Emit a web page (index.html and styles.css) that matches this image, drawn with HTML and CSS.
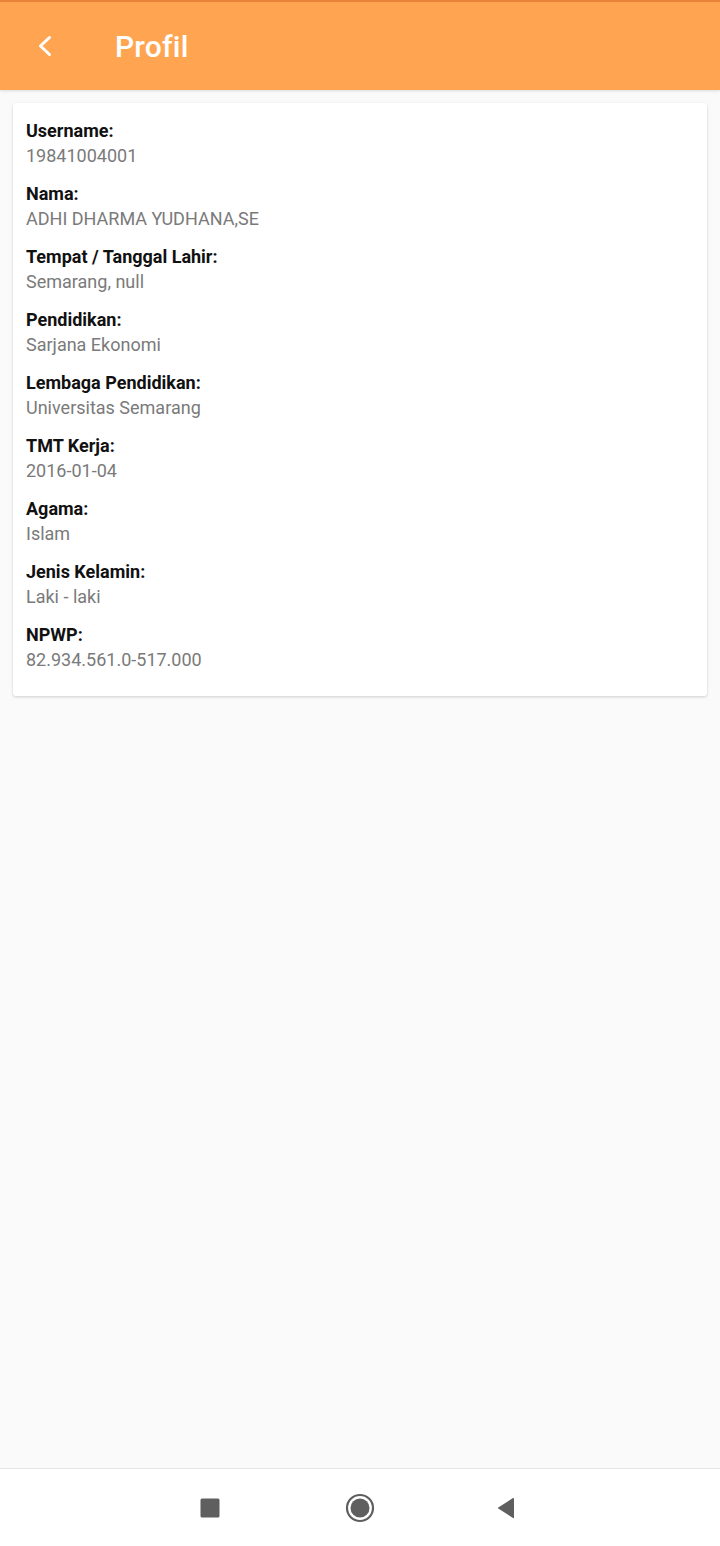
FILE: index.html
```html
<!DOCTYPE html>
<html lang="id">
<head>
    <meta charset="UTF-8">
    <meta name="viewport" content="width=device-width, initial-scale=1.0">
    <title>Profil</title>
    <link rel="stylesheet" href="styles.css">
</head>
<body>
    <div class="screen">
        <header class="appbar">
            <button class="back" aria-label="Kembali">
                <svg width="24" height="24" viewBox="0 0 24 24">
                    <polyline points="16.5,3.5 7.5,12 16.5,20.5" fill="none" stroke="#fff" stroke-width="3" stroke-linecap="round" stroke-linejoin="round"/>
                </svg>
            </button>
            <h1 class="title">Profil</h1>
        </header>

        <main class="content">
            <div class="card">
                <div class="field">
                    <div class="label">Username:</div>
                    <div class="value">19841004001</div>
                </div>
                <div class="field">
                    <div class="label">Nama:</div>
                    <div class="value">ADHI DHARMA YUDHANA,SE</div>
                </div>
                <div class="field">
                    <div class="label">Tempat / Tanggal Lahir:</div>
                    <div class="value">Semarang, null</div>
                </div>
                <div class="field">
                    <div class="label">Pendidikan:</div>
                    <div class="value">Sarjana Ekonomi</div>
                </div>
                <div class="field">
                    <div class="label">Lembaga Pendidikan:</div>
                    <div class="value">Universitas Semarang</div>
                </div>
                <div class="field">
                    <div class="label">TMT Kerja:</div>
                    <div class="value">2016-01-04</div>
                </div>
                <div class="field">
                    <div class="label">Agama:</div>
                    <div class="value">Islam</div>
                </div>
                <div class="field">
                    <div class="label">Jenis Kelamin:</div>
                    <div class="value">Laki - laki</div>
                </div>
                <div class="field">
                    <div class="label">NPWP:</div>
                    <div class="value">82.934.561.0-517.000</div>
                </div>
            </div>
        </main>

        <nav class="navbar">
            <svg class="nav-icon recents" width="40" height="40" viewBox="0 0 40 40">
                <rect x="10.5" y="10.5" width="19" height="19" rx="1.5" fill="#5f5f5f"/>
            </svg>
            <svg class="nav-icon home" width="40" height="40" viewBox="0 0 40 40">
                <circle cx="20" cy="20" r="13" fill="none" stroke="#5f5f5f" stroke-width="2.2"/>
                <circle cx="20" cy="20" r="9.5" fill="#5f5f5f"/>
            </svg>
            <svg class="nav-icon" width="40" height="40" viewBox="0 0 40 40">
                <path d="M28 10.5v19q0 1-1 .4L12.3 20.6q-.9-.6 0-1.2L27 10.1q1-.6 1 .4z" fill="#5f5f5f"/>
            </svg>
        </nav>
    </div>
</body>
</html>
```

FILE: styles.css
```css
body {
    margin: 0;
    padding: 0;
    font-family: Roboto, "Noto Sans", sans-serif;
    background-color: #fafafa;
}

.screen {
    display: flex;
    flex-direction: column;
    height: 1546px;
}

.appbar {
    display: flex;
    align-items: center;
    height: 90px;
    background-color: #ffa552;
    border-top: 2px solid #e8843a;
    box-sizing: border-box;
    box-shadow: 0 1px 3px rgba(0, 0, 0, 0.12);
    flex-shrink: 0;
}

.back {
    display: flex;
    align-items: center;
    justify-content: center;
    width: 40px;
    height: 40px;
    margin-left: 25px;
    padding: 0;
    border: none;
    background: none;
}

.title {
    margin: 0 0 0 50px;
    color: #ffffff;
    font-size: 30px;
    font-weight: 500;
    letter-spacing: 0.2px;
}

.content {
    flex: 1;
    padding: 13px 13px 0;
}

.card {
    background-color: #ffffff;
    border-radius: 3px;
    box-shadow: 0 1px 3px rgba(0, 0, 0, 0.18);
    padding: 16px 13px 23px;
}

.field {
    margin-bottom: 13px;
}

.field:last-child {
    margin-bottom: 0;
}

.label {
    font-size: 18px;
    font-weight: 700;
    color: #111111;
    line-height: 24px;
}

.value {
    font-size: 18px;
    color: #7a7a7a;
    line-height: 26px;
}

.navbar {
    display: flex;
    justify-content: center;
    align-items: center;
    gap: 106px;
    height: 77px;
    padding-right: 4px;
    background-color: #ffffff;
    border-top: 1px solid #e6e6e6;
    flex-shrink: 0;
}

.nav-icon {
    display: block;
}

.recents {
    margin-right: 4px;
}
```
